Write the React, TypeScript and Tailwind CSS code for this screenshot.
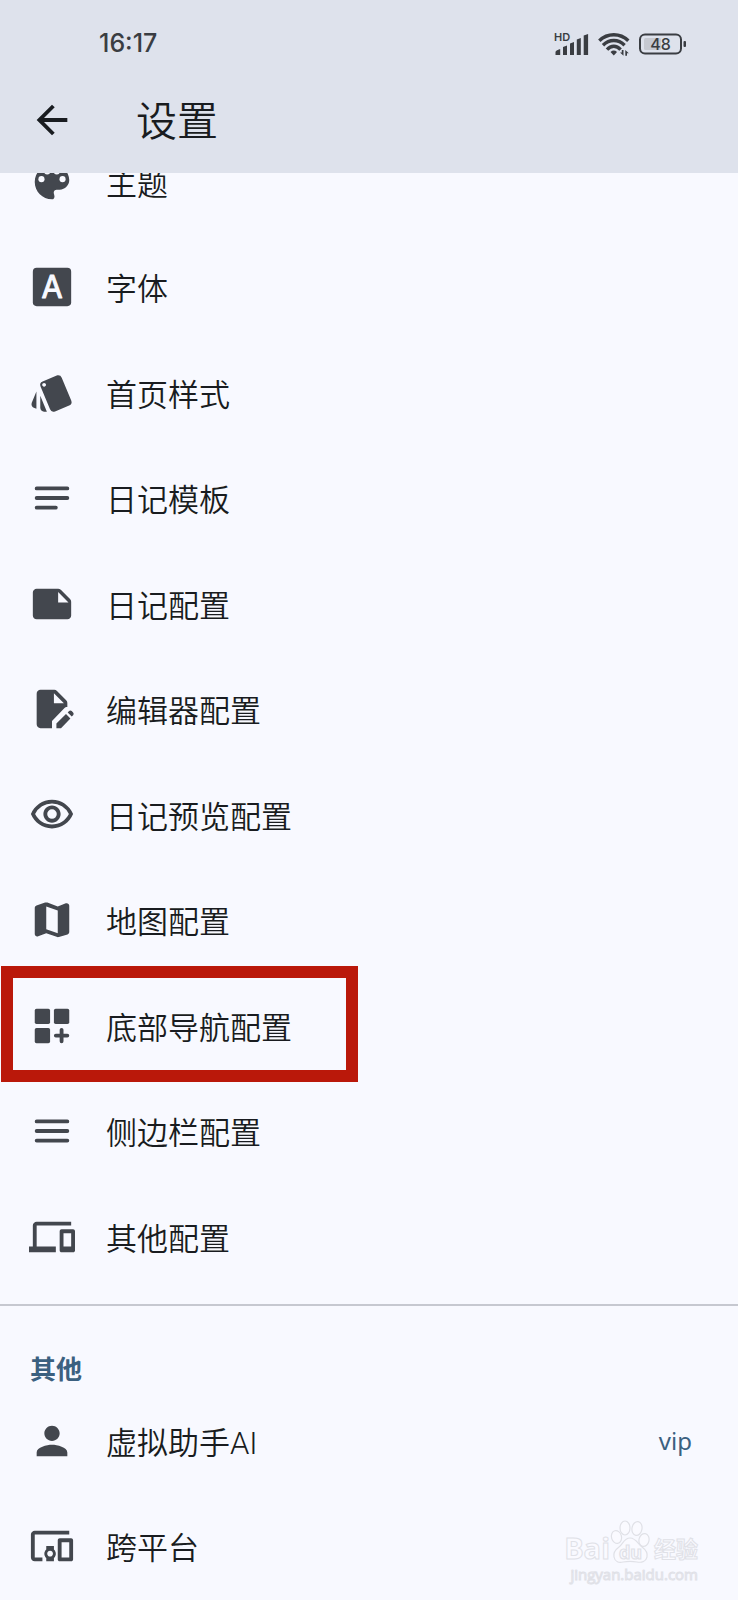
import type { ReactNode } from 'react';
import { MdArrowBack, MdDevices, MdDevicesOther, MdOutlineVisibility, MdPerson, MdStyle } from 'react-icons/md';

type Item = {
  label: string;
  icon: ReactNode;
  extra?: string;
  marked?: boolean;
};

function Glyph({ children }: { children: ReactNode }) {
  return (
    <svg viewBox="0 0 24 24" width="46" height="46" fill="currentColor" aria-hidden="true">
      {children}
    </svg>
  );
}

const lineProps = { stroke: 'currentColor', strokeWidth: 2, strokeLinecap: 'round' as const, fill: 'none' };

const configItems: Item[] = [
  {
    label: '主题',
    icon: (
      <Glyph>
        <path d="M12 3c-4.970 0-9 4.030-9 9s4.030 9 9 9c.830 0 1.300-.670 1.300-1.500 0-.39-.15-.74-.2-1.010-.1-.26-.2-.61-.2-.99 0-.83.67-1.500 1.500-1.500H16c2.760 0 5-2.240 5-5 0-4.420-4.030-8-9-8z" />
        <g fill="#f8f9ff">
          <circle cx="6.500" cy="10.500" r="1.600" />
          <circle cx="9.500" cy="6.500" r="1.600" />
          <circle cx="14.500" cy="6.500" r="1.600" />
          <circle cx="17.500" cy="10.500" r="1.600" />
        </g>
      </Glyph>
    )
  },
  {
    label: '字体',
    icon: (
      <Glyph>
        <rect x="2" y="2" width="20" height="20" rx="2" />
        <text
          x="12"
          y="17.8"
          textAnchor="middle"
          fontSize="16"
          fontFamily="Inter, sans-serif"
          fontWeight="400"
          fill="#f8f9ff"
          stroke="#f8f9ff"
          strokeWidth="0.500"
          strokeLinejoin="round"
        >
          A
        </text>
      </Glyph>
    )
  },
  { label: '首页样式', icon: <MdStyle size={46} /> },
  {
    label: '日记模板',
    icon: (
      <Glyph>
        <path d="M4 7h16M4 12h16M4 17h10" {...lineProps} />
      </Glyph>
    )
  },
  {
    label: '日记配置',
    icon: (
      <Glyph>
        <path d="M4 4h11.200c.5 0 1 .2 1.400.6l4.800 4.800c.4.4.6.900.6 1.400V18c0 1.100-.9 2-2 2H4c-1.100 0-2-.9-2-2V6c0-1.100.9-2 2-2zm11.200 1.800v5.400h5.400z" fillRule="evenodd" />
      </Glyph>
    )
  },
  {
    label: '编辑器配置',
    icon: (
      <Glyph>
        <path d="M6 2h7.200c.5 0 1 .2 1.400.6l4.800 4.800c.4.4.6.9.6 1.400V11c-.8 0-1.200.2-1.600.6L12 18.200V22H6c-1.100 0-2-.9-2-2V4c0-1.100.9-2 2-2zm7 1.800V9h5.200z" fillRule="evenodd" />
        <path d="M14.300 22v-2.500l5-4.900 2.300 2.300-4.900 5.100zM20.200 13.800l.7-.7c.4-.4 1-.4 1.400 0l.7.7c.4.4.4 1 0 1.400l-.7.7z" />
      </Glyph>
    )
  },
  { label: '日记预览配置', icon: <MdOutlineVisibility size={46} /> },
  {
    label: '地图配置',
    icon: (
      <Glyph>
        <path
          d="M14.400 20.800 9 18.900l-4.200 1.600C4 20.900 3 20.300 3 19.300V5.700c0-.6.300-1.100.9-1.300l4.500-1.500c.4-.1.800-.1 1.200 0L15 4.900l4.200-1.600c.8-.3 1.800.2 1.800 1.200v13.700c0 .6-.4 1.100-.9 1.300l-4.500 1.400c-.4.1-.8.1-1.200-.1zM15 18.900V7L9 4.900v11.900z"
          fillRule="evenodd"
        />
      </Glyph>
    )
  },
  {
    label: '底部导航配置',
    marked: true,
    icon: (
      <Glyph>
        <rect x="3" y="3" width="8" height="8" rx="0.9" />
        <rect x="13" y="3" width="8" height="8" rx="0.9" />
        <rect x="3" y="13" width="8" height="8" rx="0.9" />
        <path d="M17 14v6M14 17h6" {...lineProps} />
      </Glyph>
    )
  },
  {
    label: '侧边栏配置',
    icon: (
      <Glyph>
        <path d="M4 7h16M4 12h16M4 17h16" {...lineProps} />
      </Glyph>
    )
  },
  { label: '其他配置', icon: <MdDevices size={46} /> }
];

const otherItems: Item[] = [
  { label: '虚拟助手AI', icon: <MdPerson size={46} />, extra: 'vip' },
  { label: '跨平台', icon: <MdDevicesOther size={46} /> }
];

function SettingsList({ items }: { items: Item[] }) {
  return (
    <ul>
      {items.map(item => (
        <li key={item.label} className="relative h-[105px] even:h-[106px]">
          <button className="flex h-full w-full items-center pr-[46px] pl-[29px] text-left">
            <span className="shrink-0 text-[#43474e]">{item.icon}</span>
            <span className="ml-[31px] flex-1 pt-1.5 font-['Roboto','Noto_Sans_CJK_SC',sans-serif] text-[31px] leading-10 font-[350] text-[#191c20]">
              {item.label}
            </span>
            {item.extra && <span className="text-2xl text-[#3b6080]">{item.extra}</span>}
          </button>
          {item.marked && (
            <div className="pointer-events-none absolute -top-[7px] -bottom-1 left-px w-[357px] border-[12px] border-[#ba180a]" />
          )}
        </li>
      ))}
    </ul>
  );
}

function StatusBar() {
  return (
    <div className="flex h-[88px] items-center justify-between pr-[51px] pl-[99px] text-[#3a3d42]">
      <span className="font-[Inter] text-[25px] font-medium">16:17</span>
      <div className="flex items-center gap-2">
        <svg width="36" height="32" viewBox="0 -4 36 32" fill="currentColor" aria-hidden="true">
          <text x="0" y="8.500" fontSize="11" fontWeight="600" fontFamily="Inter, sans-serif">
            HD
          </text>
          <path d="M1.500 20q0-1.500 4.700-3v6H1.500zM9 15l4-1.500V23H9zM16 11.500l4-1.500v13h-4zM22.800 7.500l4-1.500v17h-4zM29.700 3.500l4.400-1.500v21h-4.400z" />
        </svg>
        <svg width="33" height="25" viewBox="0 0 33 25" fill="none" stroke="currentColor" strokeWidth="3.400" aria-hidden="true">
          <path d="M1.300 8.700Q7.500 2.700 15.800 2.700T30.300 8.700" />
          <path d="M5 13.200Q9.800 8.500 15.800 8.500T26.600 13.200" />
          <path d="M9 17.600Q12 14.200 15.800 14.200T22.600 17.600" />
          <path d="M12.500 20Q15.800 17.200 19 20L15.800 23.500z" fill="currentColor" stroke="none" />
          <path d="M25.500 18v5.800l-3.500-3.300h1.800V18zM27.300 23.800V18l3.500 3.300H29v2.500z" stroke="none" fill="currentColor" />
        </svg>
        <svg width="48" height="22" viewBox="0 0 48 22" aria-hidden="true">
          <rect x="5" y="5" width="17" height="12" rx="1.500" fill="#c6c9d1" />
          <rect x="1" y="1.500" width="41" height="19" rx="5" fill="none" stroke="currentColor" strokeWidth="2" />
          <rect x="44.500" y="8" width="2.500" height="6" rx="1" fill="currentColor" />
          <text x="21.500" y="17" textAnchor="middle" fontSize="16" fontWeight="500" fontFamily="Inter, sans-serif" fill="currentColor">
            48
          </text>
        </svg>
      </div>
    </div>
  );
}

function Watermark() {
  return (
    <div className="pointer-events-none absolute right-10 bottom-4 font-['Open_Sans','Noto_Sans_CJK_SC',sans-serif] text-[#fafaff] [-webkit-text-stroke:1px_#e0e1e7]">
      <div className="flex items-end justify-end font-bold">
        <span className="text-[29px] leading-8">Bai</span>
        <svg width="40" height="44" viewBox="0 0 40 44" fill="#fafaff" stroke="#e0e1e7" strokeWidth="1.200" aria-hidden="true">
          <ellipse cx="6.500" cy="17" rx="5" ry="6.500" transform="rotate(-15 6.500 17)" />
          <ellipse cx="15" cy="8" rx="5" ry="7" />
          <ellipse cx="27" cy="8.500" rx="5" ry="7" transform="rotate(10 27 8.500)" />
          <ellipse cx="34" cy="20" rx="5" ry="6.500" transform="rotate(12 34 20)" />
          <path d="M20 18c-6 0-7 6-11 9-4 3-6 6-5 10 1 5 5 6 9 5 5-1 9-1 14 0 5 1 9-1 10-5 1-4-1-7-5-10-4-3-6-9-12-9z" />
          <text x="20.500" y="39" textAnchor="middle" fontSize="18" fill="#fafaff">
            du
          </text>
        </svg>
        <span className="ml-1 text-[22px] leading-8">经验</span>
      </div>
      <div className="text-right text-[15px] leading-5">jingyan.baidu.com</div>
    </div>
  );
}

export default function App() {
  return (
    <div className="relative min-h-screen overflow-hidden bg-[#f8f9ff] font-['Noto_Sans','Noto_Sans_CJK_SC',sans-serif]">
      <header className="relative z-10 bg-[#dee2ec] pb-[21px]">
        <StatusBar />
        <div className="flex h-16 items-center pl-[29px] text-[#191c20]">
          <button aria-label="返回">
            <MdArrowBack size={46} />
          </button>
          <h1 className="ml-[61px] text-[41px] leading-none font-[350]">设置</h1>
        </div>
      </header>

      {/* the list is scrolled, so its first row slides under the header */}
      <main className="-mt-[44px]">
        <SettingsList items={configItems} />
        <hr className="mt-[15px] border-t-2 border-[#c6c8d0]" />
        <h2 className="flex h-[82px] items-end pb-px pl-[30px] text-[26px] leading-9 font-bold text-[#3b6080]">其他</h2>
        <SettingsList items={otherItems} />
      </main>

      <Watermark />
    </div>
  );
}
